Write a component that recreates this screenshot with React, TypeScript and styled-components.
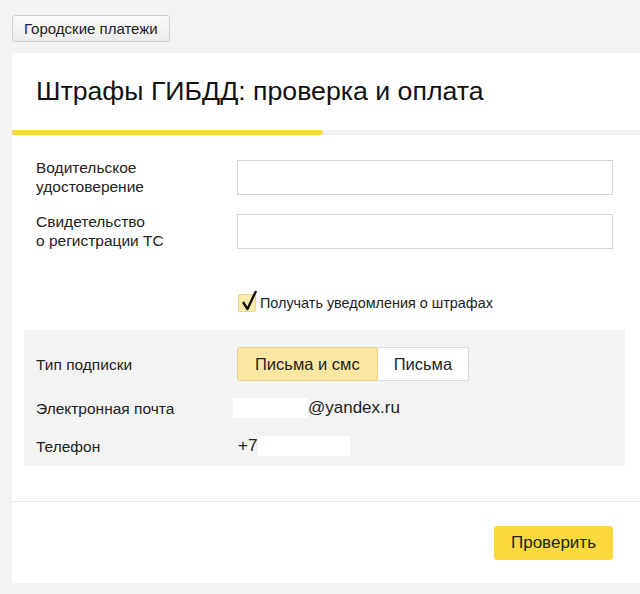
import React, { useState } from 'react';
import styled, { createGlobalStyle } from 'styled-components';

const GlobalStyle = createGlobalStyle`
    html, body {
        margin: 0;
        padding: 0;
        background: #f4f3f1;
        font-family: 'Liberation Sans', Arial, sans-serif;
        color: #1f1f1f;
    }
    * {
        box-sizing: border-box;
    }
`;

const Page = styled.div`
    padding: 15px 0 12px 12px;
`;

const CrumbButton = styled.button`
    height: 27px;
    padding: 0 11px;
    font-family: inherit;
    font-size: 15px;
    color: #222;
    background: linear-gradient(#fafafa, #ececec);
    border: 1px solid #cfcfcf;
    border-radius: 3px;
`;

const Card = styled.div`
    margin-top: 11px;
    background: #fff;
`;

const Header = styled.div`
    height: 77px;
    padding: 23px 24px 0;
    > h1 {
        margin: 0;
        font-size: 26.7px;
        font-weight: normal;
        line-height: 30px;
        color: #111;
    }
`;

const Track = styled.div`
    height: 5px;
    background: #f1f0ee;
`;

const Fill = styled.div`
    height: 5px;
    background: #f8d846;
    border-radius: 0 3px 3px 0;
`;

const FormBody = styled.div`
    padding: 23px 15px 35px 12px;
    border-bottom: 1px solid #e9e9e9;
`;

const Row = styled.div<{ $h: number; $mt?: number }>`
    display: grid;
    grid-template-columns: 201px 376px;
    align-items: center;
    height: ${(p) => p.$h}px;
    margin-top: ${(p) => p.$mt || 0}px;
    padding-left: 12px;
`;

const Label = styled.div`
    font-size: 15.5px;
    line-height: 19px;
    color: #222;
`;

const Input = styled.input`
    width: 376px;
    height: 35px;
    border: 1px solid #d6d6d6;
    outline: none;
    font-family: inherit;
    font-size: 15px;
    padding: 0 10px;
`;

const CheckLabel = styled.label`
    display: flex;
    align-items: flex-end;
    gap: 4px;
    font-size: 14.4px;
    color: #222;
    margin-left: 1px;
    > span {
        line-height: 18px;
    }
`;

const Box = styled.span`
    position: relative;
    width: 18px;
    height: 18px;
    background: #faecab;
    border: 1px solid #e1d590;
    border-radius: 2px;
    > svg {
        position: absolute;
        left: 1px;
        top: -7px;
    }
`;

const Subscription = styled.div`
    margin-top: 17px;
    background: #f3f3f3;
    padding: 17px 0 10px;
    width: 601px;
`;

const Toggle = styled.div`
    display: flex;
`;

const ToggleItem = styled.button<{ $active?: boolean }>`
    height: 34px;
    padding: 0 ${(p) => (p.$active ? 17 : 16)}px;
    font-family: inherit;
    font-size: 16.5px;
    color: #222;
    background: ${(p) => (p.$active ? '#fbe7a2' : '#fff')};
    border: 1px solid ${(p) => (p.$active ? '#e6d48d' : '#d9d9d9')};
    border-radius: ${(p) => (p.$active ? '3px 0 0 3px' : '0 3px 3px 0')};
    border-left-width: ${(p) => (p.$active ? 1 : 0)}px;
`;

const Value = styled.div<{ $shift?: number }>`
    display: flex;
    align-items: center;
    font-size: 17px;
    color: #222;
    margin-left: ${(p) => p.$shift || 0}px;
`;

const Hidden = styled.span<{ $w: number; $gap?: number }>`
    display: inline-block;
    width: ${(p) => p.$w}px;
    height: 20px;
    margin-left: ${(p) => p.$gap || 0}px;
    background: #fff;
`;

const Footer = styled.div`
    display: flex;
    justify-content: flex-end;
    padding: 24px 27px 23px;
`;

const Submit = styled.button`
    width: 119px;
    height: 34px;
    font-family: inherit;
    font-size: 17px;
    color: #222;
    background: #fbd93d;
    border: none;
    border-radius: 3px;
`;

const App = () => {
    const [mode, setMode] = useState('sms');
    return (
        <Page>
            <GlobalStyle />
            <CrumbButton>Городские платежи</CrumbButton>
            <Card>
                <Header>
                    <h1>Штрафы ГИБДД: проверка и оплата</h1>
                </Header>
                <Track>
                    <Fill style={{ width: 311 }} />
                </Track>
                <FormBody>
                    <Row $h={35}>
                        <Label>
                            Водительское
                            <br />
                            удостоверение
                        </Label>
                        <Input />
                    </Row>
                    <Row $h={35} $mt={19}>
                        <Label>
                            Свидетельство
                            <br />
                            о регистрации ТС
                        </Label>
                        <Input />
                    </Row>
                    <Row $h={20} $mt={46}>
                        <div />
                        <CheckLabel>
                            <Box>
                                <svg width="20" height="24" viewBox="0 0 20 24">
                                    <path
                                        d="M3 14 L7.5 21 L16 3"
                                        fill="none"
                                        stroke="#111"
                                        strokeWidth="2.4"
                                        strokeLinejoin="round"
                                    />
                                </svg>
                            </Box>
                            <span>Получать уведомления о штрафах</span>
                        </CheckLabel>
                    </Row>
                    <Subscription>
                        <Row $h={34}>
                            <Label>Тип подписки</Label>
                            <Toggle>
                                <ToggleItem
                                    $active={mode === 'sms'}
                                    onClick={() => setMode('sms')}
                                >
                                    Письма и смс
                                </ToggleItem>
                                <ToggleItem
                                    $active={mode === 'mail'}
                                    onClick={() => setMode('mail')}
                                >
                                    Письма
                                </ToggleItem>
                            </Toggle>
                        </Row>
                        <Row $h={20} $mt={17}>
                            <Label>Электронная почта</Label>
                            <Value $shift={-4}>
                                <Hidden $w={75} />
                                @yandex.ru
                            </Value>
                        </Row>
                        <Row $h={20} $mt={18}>
                            <Label>Телефон</Label>
                            <Value $shift={1}>
                                +7
                                <Hidden $w={92} $gap={1} />
                            </Value>
                        </Row>
                    </Subscription>
                </FormBody>
                <Footer>
                    <Submit>Проверить</Submit>
                </Footer>
            </Card>
        </Page>
    );
};

export default App;
